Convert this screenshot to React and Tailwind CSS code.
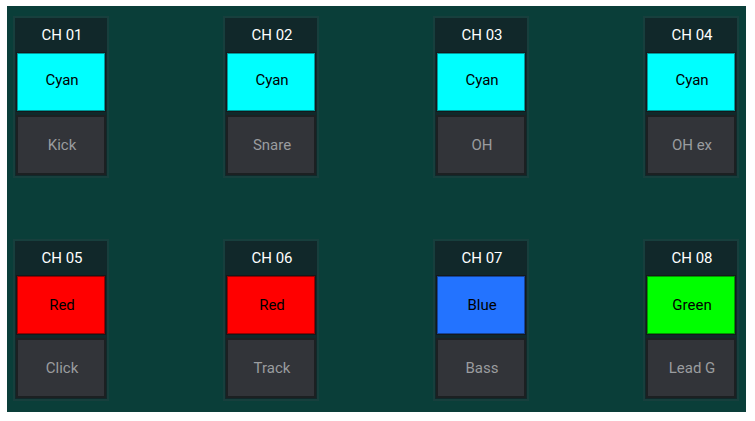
const channels = [
  { id: 'CH 01', color: 'Cyan', fill: 'bg-[#00ffff] pb-1', name: 'Kick' },
  { id: 'CH 02', color: 'Cyan', fill: 'bg-[#00ffff] pb-1', name: 'Snare' },
  { id: 'CH 03', color: 'Cyan', fill: 'bg-[#00ffff] pb-1', name: 'OH' },
  { id: 'CH 04', color: 'Cyan', fill: 'bg-[#00ffff] pb-1', name: 'OH ex' },
  { id: 'CH 05', color: 'Red', fill: 'bg-[#ff0000]', name: 'Click' },
  { id: 'CH 06', color: 'Red', fill: 'bg-[#ff0000]', name: 'Track' },
  { id: 'CH 07', color: 'Blue', fill: 'bg-[#2373ff]', name: 'Bass' },
  { id: 'CH 08', color: 'Green', fill: 'bg-[#00ff00]', name: 'Lead G' },
];

function ChannelCard({ id, color, fill, name }) {
  return (
    <section
      aria-label={id}
      className="flex w-24 flex-col border-2 border-[#173f3d] bg-[#11282a] px-px pb-px"
    >
      <h2 className="flex h-[34px] items-center justify-center pl-0.5 text-white">{id}</h2>
      <div className="flex flex-col gap-[3px]">
        <button
          type="button"
          className={`h-[60px] border border-[#14191b] pl-0.5 text-black shadow-[inset_0_0_0_1px_rgba(0,0,0,0.4)] ${fill}`}
        >
          {color}
        </button>
        <button
          type="button"
          className="h-[60px] border-2 border-[#1c2022] bg-[#323439] pl-0.5 text-[#9a9c9f]"
        >
          {name}
        </button>
      </div>
    </section>
  );
}

export default function App() {
  return (
    <div className="bg-white pt-1.5 pr-[9px] pb-[9px] pl-[7px] font-['Roboto',sans-serif] text-[15px] leading-5">
      <main className="grid grid-cols-[repeat(4,auto)] justify-between gap-y-[61px] bg-[#0a3e39] pt-2.5 pr-[7px] pb-[11px] pl-1.5">
        {channels.map((channel) => (
          <ChannelCard key={channel.id} {...channel} />
        ))}
      </main>
    </div>
  );
}
